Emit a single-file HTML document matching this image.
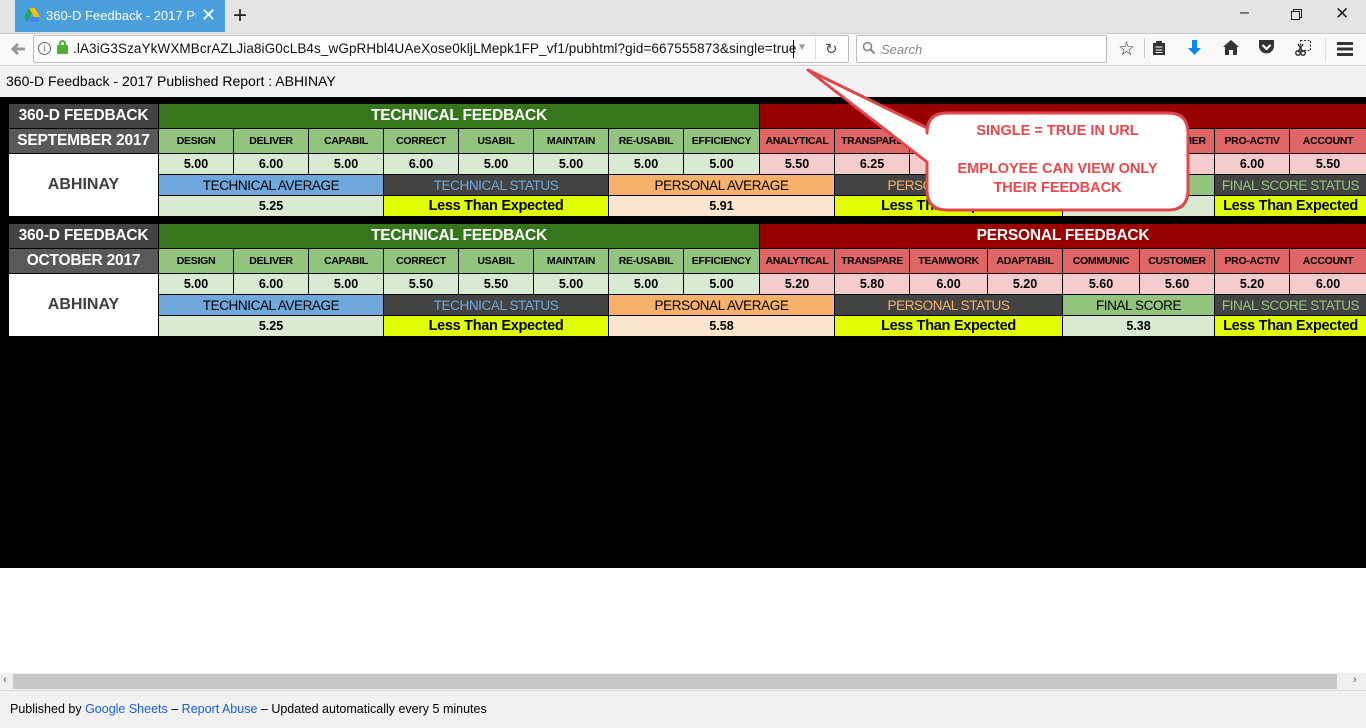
<!DOCTYPE html>
<html><head><meta charset="utf-8">
<style>
*{margin:0;padding:0;box-sizing:border-box}
body{width:1366px;height:728px;position:relative;overflow:hidden;background:#fff;font-family:"Liberation Sans",sans-serif}
.a{position:absolute}
.c{position:absolute;display:flex;align-items:center;justify-content:center;font-family:"Liberation Sans",sans-serif;font-weight:bold;white-space:nowrap;overflow:hidden}
.h{color:#fff;font-size:15.5px;letter-spacing:-0.2px}
.l{font-size:10.5px;color:#000;letter-spacing:-0.3px}
.v{font-size:12.5px;color:#000}
.s{font-size:13.5px;font-weight:normal;letter-spacing:-0.4px}
.y{background:#e1ff00;font-size:14.5px;color:#000;letter-spacing:-0.3px}
.tl{background:#93c47d}.pl{background:#e06666}.tv{background:#d9ead3}.pv{background:#f4cccc}
</style></head><body>
<div class="a" style="left:0;top:0;width:1366px;height:33px;background:#e3e4e6"></div>
<div class="a" style="left:15px;top:0;width:210px;height:32px;background:#4a9fde"></div>
<svg class="a" style="left:24px;top:8px" width="16" height="15" viewBox="0 0 16 15"><path d="M5 0h6l5 9h-6z" fill="#fbbc04"/><path d="M5 0L0 9l3 5 5-9z" fill="#1fa463"/><path d="M3 14h10l3-5H6z" fill="#4285f4"/></svg>
<div class="a" style="left:46px;top:8px;font-size:13px;color:#fff;width:150px;overflow:hidden;white-space:nowrap">360-D Feedback - 2017 Publi</div>
<div class="a" style="left:201px;top:5px;font-size:18px;color:#fff">✕</div>
<div class="a" style="left:233px;top:2px;font-size:24px;color:#222">+</div>
<div class="a" style="left:1240px;top:4px;font-size:16px;color:#222">–</div>
<svg class="a" style="left:1291px;top:9px" width="11" height="11"><rect x="0.5" y="2.5" width="8" height="8" fill="none" stroke="#222"/><path d="M2.5 2.5V.5h8v8h-2" fill="none" stroke="#222"/></svg>
<div class="a" style="left:1335px;top:4px;font-size:17px;color:#222">✕</div>
<div class="a" style="left:0;top:33px;width:1366px;height:33px;background:#f9f9fa;border-top:1px solid #ccc;border-bottom:1px solid #ccc"></div>
<svg class="a" style="left:10px;top:42px" width="16" height="14"><path d="M15 7H4M8 2L3 7l5 5" fill="none" stroke="#999" stroke-width="3"/></svg>
<div class="a" style="left:33px;top:35px;width:816px;height:28px;background:#fff;border:1px solid #bbb;border-radius:2px"></div>
<div class="a" style="left:38px;top:42px;width:13px;height:13px;border:1.5px solid #666;border-radius:50%;font-size:9px;text-align:center;line-height:10px;color:#666;font-family:serif">i</div>
<div class="a" style="left:57px;top:45px;width:11px;height:9px;background:#4caf36;border-radius:1px"></div>
<div class="a" style="left:59px;top:40px;width:7px;height:7px;border:2px solid #4caf36;border-bottom:none;border-radius:4px 4px 0 0"></div>
<div class="a" style="left:73px;top:41px;font-size:13.5px;color:#111;white-space:nowrap;letter-spacing:0.1px">.lA3iG3SzaYkWXMBcrAZLJia8iG0cLB4s_wGpRHbl4UAeXose0kljLMepk1FP_vf1/pubhtml?gid=667555873&amp;single=true</div>
<div class="a" style="left:793px;top:40px;width:1px;height:18px;background:#000"></div>
<div class="a" style="left:797px;top:42px;font-size:10px;color:#999">▼</div>
<div class="a" style="left:815px;top:37px;width:1px;height:24px;background:#ddd"></div>
<div class="a" style="left:825px;top:40px;font-size:15px;color:#555">↻</div>
<div class="a" style="left:856px;top:35px;width:251px;height:28px;background:#fff;border:1px solid #bbb;border-radius:2px"></div>
<svg class="a" style="left:862px;top:41px" width="14" height="14"><circle cx="5.5" cy="5.5" r="4" fill="none" stroke="#888" stroke-width="1.6"/><path d="M8.5 8.5l4 4" stroke="#888" stroke-width="2"/></svg>
<div class="a" style="left:881px;top:42px;font-size:13px;color:#888;font-style:italic">Search</div>
<div class="a" style="left:1118px;top:38px;font-size:19px;color:#333">☆</div>
<div class="a" style="left:1144px;top:38px;width:1px;height:20px;background:#ccc"></div>
<svg class="a" style="left:1152px;top:40px" width="14" height="16"><rect x="1" y="3" width="12" height="12" fill="#333"/><rect x="4" y="1" width="6" height="3" fill="#333"/><path d="M3.5 7h7M3.5 10h7M3.5 12.5h7" stroke="#fff"/></svg>
<svg class="a" style="left:1187px;top:40px" width="15" height="16"><path d="M5 0h5v8h4l-6.5 7L1 8h4z" fill="#0a84ff"/></svg>
<svg class="a" style="left:1223px;top:40px" width="16" height="15"><path d="M8 0l8 7h-2v8h-4v-5H6v5H2V7H0z" fill="#333"/></svg>
<svg class="a" style="left:1258px;top:40px" width="17" height="15"><path d="M1 0h15v6a7.5 7.5 0 0 1-15 0z" fill="#333"/><path d="M4.5 5l4 4 4-4" fill="none" stroke="#fff" stroke-width="2.2"/></svg>
<svg class="a" style="left:1295px;top:40px" width="16" height="16"><rect x="5.5" y=".5" width="10" height="10" fill="none" stroke="#333" stroke-dasharray="2 1.5"/><circle cx="3" cy="13" r="2.2" fill="none" stroke="#333" stroke-width="1.5"/><circle cx="8" cy="13" r="2.2" fill="none" stroke="#333" stroke-width="1.5"/><path d="M3 4l5 8M8 4l-5 8" stroke="#333" stroke-width="1.5"/></svg>
<div class="a" style="left:1325px;top:38px;width:1px;height:24px;background:#ddd"></div>
<svg class="a" style="left:1337px;top:42px" width="16" height="14"><path d="M0 1.5h16M0 7h16M0 12.5h16" stroke="#333" stroke-width="3"/></svg>
<div class="a" style="left:0;top:67px;width:1366px;height:30px;background:#f1f1f1"></div>
<div class="a" style="left:6px;top:73px;font-size:14px;color:#000">360-D Feedback - 2017 Published Report : ABHINAY</div>
<div class="a" style="left:0;top:97px;width:1366px;height:471px;background:#000"></div>

<div class="c h" style="left:9px;top:104px;width:149px;height:24px;background:#434343">360-D FEEDBACK</div>
<div class="c h" style="left:159px;top:104px;width:600px;height:24px;background:#38761d">TECHNICAL FEEDBACK</div>
<div class="c h" style="left:760px;top:104px;width:606px;height:24px;background:#990000"></div>
<div class="c h" style="left:9px;top:129px;width:149px;height:24px;background:#595959">SEPTEMBER 2017</div>
<div class="c l tl" style="left:159px;top:129px;width:74px;height:24px">DESIGN</div>
<div class="c l tl" style="left:234px;top:129px;width:74px;height:24px">DELIVER</div>
<div class="c l tl" style="left:309px;top:129px;width:74px;height:24px">CAPABIL</div>
<div class="c l tl" style="left:384px;top:129px;width:74px;height:24px">CORRECT</div>
<div class="c l tl" style="left:459px;top:129px;width:74px;height:24px">USABIL</div>
<div class="c l tl" style="left:534px;top:129px;width:74px;height:24px">MAINTAIN</div>
<div class="c l tl" style="left:609px;top:129px;width:74px;height:24px">RE-USABIL</div>
<div class="c l tl" style="left:684px;top:129px;width:75px;height:24px">EFFICIENCY</div>
<div class="c l pl" style="left:760px;top:129px;width:74px;height:24px">ANALYTICAL</div>
<div class="c l pl" style="left:835px;top:129px;width:74px;height:24px">TRANSPARE</div>
<div class="c l pl" style="left:910px;top:129px;width:77px;height:24px">TEAMWORK</div>
<div class="c l pl" style="left:988px;top:129px;width:74px;height:24px">ADAPTABIL</div>
<div class="c l pl" style="left:1063px;top:129px;width:76px;height:24px">COMMUNIC</div>
<div class="c l pl" style="left:1140px;top:129px;width:74px;height:24px">CUSTOMER</div>
<div class="c l pl" style="left:1215px;top:129px;width:74px;height:24px">PRO-ACTIV</div>
<div class="c l pl" style="left:1290px;top:129px;width:76px;height:24px">ACCOUNT</div>
<div class="c" style="left:9px;top:154px;width:149px;height:62px;background:#fff;color:#404040;font-size:16px">ABHINAY</div>
<div class="c v tv" style="left:159px;top:154px;width:74px;height:20px">5.00</div>
<div class="c v tv" style="left:234px;top:154px;width:74px;height:20px">6.00</div>
<div class="c v tv" style="left:309px;top:154px;width:74px;height:20px">5.00</div>
<div class="c v tv" style="left:384px;top:154px;width:74px;height:20px">6.00</div>
<div class="c v tv" style="left:459px;top:154px;width:74px;height:20px">5.00</div>
<div class="c v tv" style="left:534px;top:154px;width:74px;height:20px">5.00</div>
<div class="c v tv" style="left:609px;top:154px;width:74px;height:20px">5.00</div>
<div class="c v tv" style="left:684px;top:154px;width:75px;height:20px">5.00</div>
<div class="c v pv" style="left:760px;top:154px;width:74px;height:20px">5.50</div>
<div class="c v pv" style="left:835px;top:154px;width:74px;height:20px">6.25</div>
<div class="c v pv" style="left:910px;top:154px;width:77px;height:20px"></div>
<div class="c v pv" style="left:988px;top:154px;width:74px;height:20px"></div>
<div class="c v pv" style="left:1063px;top:154px;width:76px;height:20px"></div>
<div class="c v pv" style="left:1140px;top:154px;width:74px;height:20px"></div>
<div class="c v pv" style="left:1215px;top:154px;width:74px;height:20px">6.00</div>
<div class="c v pv" style="left:1290px;top:154px;width:76px;height:20px">5.50</div>
<div class="c s" style="left:159px;top:175px;width:224px;height:20px;background:#6fa8dc;color:#000">TECHNICAL AVERAGE</div>
<div class="c s" style="left:384px;top:175px;width:224px;height:20px;background:#434343;color:#6fa8dc">TECHNICAL STATUS</div>
<div class="c s" style="left:609px;top:175px;width:225px;height:20px;background:#f6b26b;color:#000">PERSONAL AVERAGE</div>
<div class="c s" style="left:835px;top:175px;width:227px;height:20px;background:#434343;color:#f6b26b">PERSONAL STATUS</div>
<div class="c s" style="left:1063px;top:175px;width:151px;height:20px;background:#93c47d;color:#000">FINAL SCORE</div>
<div class="c s" style="left:1215px;top:175px;width:151px;height:20px;background:#434343;color:#93c47d">FINAL SCORE STATUS</div>
<div class="c v tv" style="left:159px;top:196px;width:224px;height:20px">5.25</div>
<div class="c y" style="left:384px;top:196px;width:224px;height:20px">Less Than Expected</div>
<div class="c v" style="left:609px;top:196px;width:225px;height:20px;background:#fce5cd">5.91</div>
<div class="c y" style="left:835px;top:196px;width:227px;height:20px">Less Than Expected</div>
<div class="c v tv" style="left:1063px;top:196px;width:151px;height:20px"></div>
<div class="c y" style="left:1215px;top:196px;width:151px;height:20px">Less Than Expected</div>

<div class="c h" style="left:9px;top:224px;width:149px;height:24px;background:#434343">360-D FEEDBACK</div>
<div class="c h" style="left:159px;top:224px;width:600px;height:24px;background:#38761d">TECHNICAL FEEDBACK</div>
<div class="c h" style="left:760px;top:224px;width:606px;height:24px;background:#990000">PERSONAL FEEDBACK</div>
<div class="c h" style="left:9px;top:249px;width:149px;height:24px;background:#595959">OCTOBER 2017</div>
<div class="c l tl" style="left:159px;top:249px;width:74px;height:24px">DESIGN</div>
<div class="c l tl" style="left:234px;top:249px;width:74px;height:24px">DELIVER</div>
<div class="c l tl" style="left:309px;top:249px;width:74px;height:24px">CAPABIL</div>
<div class="c l tl" style="left:384px;top:249px;width:74px;height:24px">CORRECT</div>
<div class="c l tl" style="left:459px;top:249px;width:74px;height:24px">USABIL</div>
<div class="c l tl" style="left:534px;top:249px;width:74px;height:24px">MAINTAIN</div>
<div class="c l tl" style="left:609px;top:249px;width:74px;height:24px">RE-USABIL</div>
<div class="c l tl" style="left:684px;top:249px;width:75px;height:24px">EFFICIENCY</div>
<div class="c l pl" style="left:760px;top:249px;width:74px;height:24px">ANALYTICAL</div>
<div class="c l pl" style="left:835px;top:249px;width:74px;height:24px">TRANSPARE</div>
<div class="c l pl" style="left:910px;top:249px;width:77px;height:24px">TEAMWORK</div>
<div class="c l pl" style="left:988px;top:249px;width:74px;height:24px">ADAPTABIL</div>
<div class="c l pl" style="left:1063px;top:249px;width:76px;height:24px">COMMUNIC</div>
<div class="c l pl" style="left:1140px;top:249px;width:74px;height:24px">CUSTOMER</div>
<div class="c l pl" style="left:1215px;top:249px;width:74px;height:24px">PRO-ACTIV</div>
<div class="c l pl" style="left:1290px;top:249px;width:76px;height:24px">ACCOUNT</div>
<div class="c" style="left:9px;top:274px;width:149px;height:62px;background:#fff;color:#404040;font-size:16px">ABHINAY</div>
<div class="c v tv" style="left:159px;top:274px;width:74px;height:20px">5.00</div>
<div class="c v tv" style="left:234px;top:274px;width:74px;height:20px">6.00</div>
<div class="c v tv" style="left:309px;top:274px;width:74px;height:20px">5.00</div>
<div class="c v tv" style="left:384px;top:274px;width:74px;height:20px">5.50</div>
<div class="c v tv" style="left:459px;top:274px;width:74px;height:20px">5.50</div>
<div class="c v tv" style="left:534px;top:274px;width:74px;height:20px">5.00</div>
<div class="c v tv" style="left:609px;top:274px;width:74px;height:20px">5.00</div>
<div class="c v tv" style="left:684px;top:274px;width:75px;height:20px">5.00</div>
<div class="c v pv" style="left:760px;top:274px;width:74px;height:20px">5.20</div>
<div class="c v pv" style="left:835px;top:274px;width:74px;height:20px">5.80</div>
<div class="c v pv" style="left:910px;top:274px;width:77px;height:20px">6.00</div>
<div class="c v pv" style="left:988px;top:274px;width:74px;height:20px">5.20</div>
<div class="c v pv" style="left:1063px;top:274px;width:76px;height:20px">5.60</div>
<div class="c v pv" style="left:1140px;top:274px;width:74px;height:20px">5.60</div>
<div class="c v pv" style="left:1215px;top:274px;width:74px;height:20px">5.20</div>
<div class="c v pv" style="left:1290px;top:274px;width:76px;height:20px">6.00</div>
<div class="c s" style="left:159px;top:295px;width:224px;height:20px;background:#6fa8dc;color:#000">TECHNICAL AVERAGE</div>
<div class="c s" style="left:384px;top:295px;width:224px;height:20px;background:#434343;color:#6fa8dc">TECHNICAL STATUS</div>
<div class="c s" style="left:609px;top:295px;width:225px;height:20px;background:#f6b26b;color:#000">PERSONAL AVERAGE</div>
<div class="c s" style="left:835px;top:295px;width:227px;height:20px;background:#434343;color:#f6b26b">PERSONAL STATUS</div>
<div class="c s" style="left:1063px;top:295px;width:151px;height:20px;background:#93c47d;color:#000">FINAL SCORE</div>
<div class="c s" style="left:1215px;top:295px;width:151px;height:20px;background:#434343;color:#93c47d">FINAL SCORE STATUS</div>
<div class="c v tv" style="left:159px;top:316px;width:224px;height:20px">5.25</div>
<div class="c y" style="left:384px;top:316px;width:224px;height:20px">Less Than Expected</div>
<div class="c v" style="left:609px;top:316px;width:225px;height:20px;background:#fce5cd">5.58</div>
<div class="c y" style="left:835px;top:316px;width:227px;height:20px">Less Than Expected</div>
<div class="c v tv" style="left:1063px;top:316px;width:151px;height:20px">5.38</div>
<div class="c y" style="left:1215px;top:316px;width:151px;height:20px">Less Than Expected</div>

<svg class="a" style="left:0;top:0" width="1366" height="728">
<path d="M947 113 H1168 Q1188 113 1188 133 V190 Q1188 210 1168 210 H947 Q927 210 927 190 V162 L808 70 L927 128 V133 Q927 113 947 113 Z" fill="#fff" stroke="#e0474c" stroke-width="3" stroke-linejoin="round"/>
</svg>
<div class="a" style="left:927px;top:123px;width:261px;text-align:center;color:#e8474c;font-weight:bold;font-size:14.5px">SINGLE = TRUE IN URL</div>
<div class="a" style="left:927px;top:160px;width:261px;text-align:center;color:#e8474c;font-weight:bold;font-size:14.5px;line-height:19px">EMPLOYEE CAN VIEW ONLY<br>THEIR FEEDBACK</div>

<div class="a" style="left:0;top:673px;width:1366px;height:17px;background:#f0f0f0"></div>
<div class="a" style="left:13px;top:674px;width:1324px;height:15px;background:#c8c8c8"></div>
<div class="a" style="left:3px;top:674px;font-size:11px;color:#555">‹</div>
<div class="a" style="left:1353px;top:674px;font-size:11px;color:#555">›</div>
<div class="a" style="left:0;top:690px;width:1366px;height:38px;background:#f1f1f1;border-top:1px solid #ddd"></div>
<div class="a" style="left:10px;top:702px;font-size:12.5px;color:#000">Published by <span style="color:#1a5fd6">Google Sheets</span> – <span style="color:#1a5fd6">Report Abuse</span> – Updated automatically every 5 minutes</div>
</body></html>
